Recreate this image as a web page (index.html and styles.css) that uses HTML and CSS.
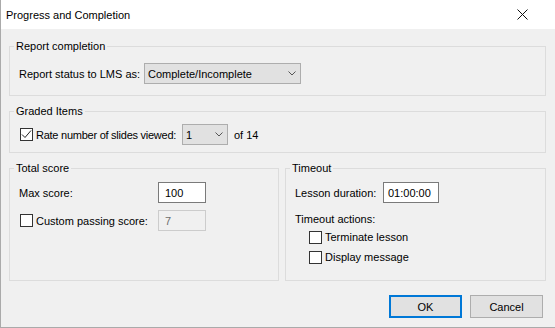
FILE: index.html
```html
<!DOCTYPE html>
<html lang="en">
<head>
    <meta charset="UTF-8">
    <title>Progress and Completion</title>
    <link rel="stylesheet" href="styles.css">
</head>
<body>
    <div class="dialog">
        <div class="titlebar">
            <span class="title">Progress and Completion</span>
            <span class="close">
                <svg width="11" height="11" viewBox="0 0 11 11"><path d="M0.5 0.5 L10.5 10.5 M10.5 0.5 L0.5 10.5" stroke="#111" stroke-width="1" fill="none"/></svg>
            </span>
        </div>

        <div class="content">
            <fieldset class="group group-report">
                <legend>Report completion</legend>
                <div class="row">
                    <span class="label label-status">Report status to LMS as:</span>
                    <div class="select select-status">
                        <span>Complete/Incomplete</span>
                        <svg width="8" height="5" viewBox="0 0 8 5"><polyline points="0.5,0.5 4,4 7.5,0.5" stroke="#555" fill="none"/></svg>
                    </div>
                </div>
            </fieldset>

            <fieldset class="group group-graded">
                <legend>Graded Items</legend>
                <div class="row">
                    <span class="check-row check-slides">
                        <span class="checkbox">
                            <svg width="11" height="11" viewBox="0 0 11 11"><polyline points="1,5.5 4,8.5 10,1.5" stroke="#222" fill="none"/></svg>
                        </span>
                        <span class="slides-text">Rate number of slides viewed:</span>
                    </span>
                    <div class="select select-slides">
                        <span>1</span>
                        <svg width="8" height="5" viewBox="0 0 8 5"><polyline points="0.5,0.5 4,4 7.5,0.5" stroke="#555" fill="none"/></svg>
                    </div>
                    <span class="of-total">of 14</span>
                </div>
            </fieldset>

            <div class="columns">
                <fieldset class="group group-score">
                    <legend>Total score</legend>
                    <div class="row">
                        <span class="label label-score">Max score:</span>
                        <div class="input input-score">100</div>
                    </div>
                    <div class="row row-gap">
                        <span class="check-row check-passing">
                            <span class="checkbox"></span>
                            <span>Custom passing score:</span>
                        </span>
                        <div class="input input-score disabled">7</div>
                    </div>
                </fieldset>

                <fieldset class="group group-timeout">
                    <legend>Timeout</legend>
                    <div class="row">
                        <span class="label label-duration">Lesson duration:</span>
                        <div class="input input-duration">01:00:00</div>
                    </div>
                    <div class="actions-title">Timeout actions:</div>
                    <div class="action">
                        <span class="checkbox"></span>
                        <span>Terminate lesson</span>
                    </div>
                    <div class="action">
                        <span class="checkbox"></span>
                        <span>Display message</span>
                    </div>
                </fieldset>
            </div>

            <div class="buttons">
                <button class="btn btn-default">OK</button>
                <button class="btn">Cancel</button>
            </div>
        </div>
    </div>
</body>
</html>
```

FILE: styles.css
```css
* {
    box-sizing: border-box;
}

body {
    margin: 0;
    font-family: "Liberation Sans", Arial, sans-serif;
    font-size: 11px;
    color: #000;
    background: #fff;
    white-space: nowrap;
}

.dialog {
    width: 555px;
    height: 328px;
    background: #f0f0f0;
    border-left: 1px solid #aaaaaa;
    border-bottom: 1px solid #aaaaaa;
    display: flex;
    flex-direction: column;
}

.titlebar {
    height: 29px;
    background: #fff;
    display: flex;
    align-items: center;
    justify-content: space-between;
    padding-left: 5px;
}

.title {
    font-size: 11px;
}

.close {
    display: flex;
    margin-right: 27px;
}

.content {
    padding: 10px 9px 0 8px;
    display: flex;
    flex-direction: column;
}

.group {
    margin: 0;
    min-width: 0;
    border: 1px solid #dcdcdc;
    padding: 0 9px;
}

.group legend {
    padding: 0 2px;
    margin-left: -5px;
    line-height: 15px;
}

.group-report {
    padding-top: 9px;
    padding-bottom: 11px;
}

.group-graded {
    margin-top: 8px;
    padding-top: 5px;
    padding-bottom: 7px;
}

.columns {
    display: flex;
    gap: 6px;
    margin-top: 8px;
}

.group-score {
    width: 270px;
    height: 120px;
    padding-top: 6px;
}

.group-timeout {
    flex: 1;
    height: 120px;
    padding-top: 6px;
}

.row {
    display: flex;
    align-items: center;
}

.row-gap {
    margin-top: 7px;
}

.label-status {
    width: 125px;
}

.label-score {
    width: 139px;
}

.label-duration {
    width: 88px;
}

.select {
    height: 21px;
    display: flex;
    align-items: center;
    justify-content: space-between;
    background: #e1e1e1;
    border: 1px solid #adadad;
    padding: 0 4px 0 3px;
}

.select svg {
    display: block;
}

.select-status {
    width: 157px;
}

.select-slides {
    width: 46px;
}

.of-total {
    margin-left: 6px;
}

.check-row {
    display: flex;
    align-items: center;
    gap: 3px;
    margin-left: 1px;
}

.check-slides {
    width: 162px;
}

.slides-text {
    letter-spacing: -0.25px;
}

.check-passing {
    width: 138px;
}

.checkbox {
    flex: none;
    width: 13px;
    height: 13px;
    border: 1px solid #333;
    background: #fff;
    display: flex;
    align-items: center;
    justify-content: center;
}

.input {
    height: 21px;
    display: flex;
    align-items: center;
    background: #fff;
    border: 1px solid #7a7a7a;
    padding-left: 6px;
}

.input-score {
    width: 48px;
}

.input-duration {
    width: 56px;
    padding-left: 4px;
}

.input.disabled {
    background: #f0f0f0;
    border-color: #cccccc;
    color: #6d6d6d;
}

.actions-title {
    margin-top: 9px;
    line-height: 15px;
}

.action {
    height: 20px;
    display: flex;
    align-items: center;
    gap: 3px;
    padding-left: 14px;
}

.buttons {
    display: flex;
    justify-content: flex-end;
    gap: 8px;
    margin-top: 14px;
    margin-right: 3px;
}

.btn {
    width: 73px;
    height: 23px;
    font-family: inherit;
    font-size: 11px;
    color: #000;
    background: #e1e1e1;
    border: 1px solid #adadad;
    padding: 0;
}

.btn-default {
    border: 2px solid #0078d7;
}
```
